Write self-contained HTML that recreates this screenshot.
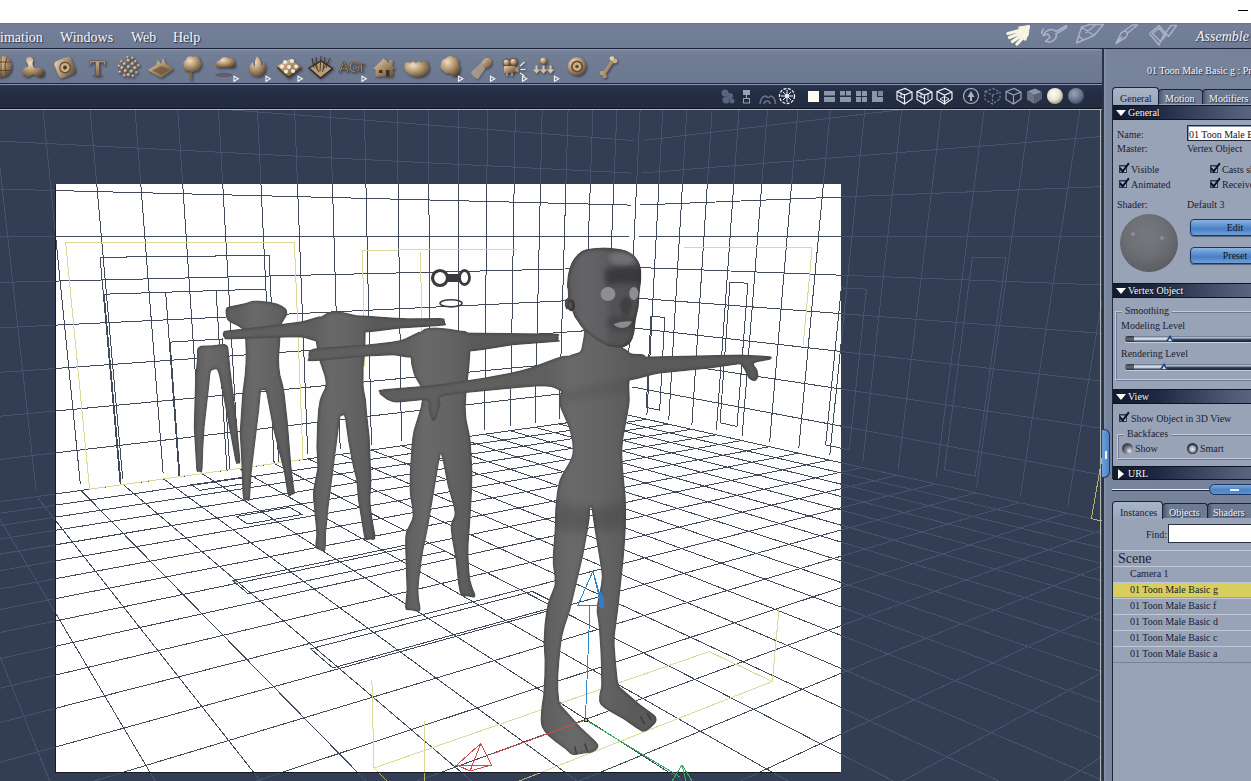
<!DOCTYPE html>
<html><head><meta charset="utf-8"><title>Carrara</title>
<style>
html,body{margin:0;padding:0;background:#fff;overflow:hidden}
body{width:1251px;height:781px;position:relative;font-family:"Liberation Serif",serif;font-size:11px;color:#1b2130}
div,span{box-sizing:border-box}
.abs{position:absolute}
#menubar{position:absolute;left:0;top:23px;width:1251px;height:25px;background:linear-gradient(#6b7386 0,#747f99 2px,#717d96 60%,#6f7b93 100%)}
#menubar span.m{position:absolute;top:7px;font-size:14px;color:#f4f6fa;text-shadow:1px 1px 1px #2a3246;white-space:nowrap}
#l48{position:absolute;left:0;top:48px;width:1251px;height:1px;background:#1a2238}
#toolbar{position:absolute;left:0;top:49px;width:1103px;height:34px;background:linear-gradient(#8e9bb4 0,#747f98 2px,#6f7b92 50%,#6c7890 100%)}
#l83{position:absolute;left:0;top:83px;width:1103px;height:1px;background:#1b2440}
#l84{position:absolute;left:0;top:84px;width:1103px;height:1px;background:#8492ae}
#strip{position:absolute;left:0;top:85px;width:1103px;height:23px;background:linear-gradient(#2a3550,#242e43 30%,#222b3f)}
#l108{position:absolute;left:0;top:108px;width:1103px;height:1px;background:#0f141e}
#l109{position:absolute;left:0;top:109px;width:1102px;height:1px;background:#b4b8b2}
#vp{position:absolute;left:0;top:110px;width:1102px;height:671px;background:#333e55;overflow:hidden}
#vp svg{position:absolute;left:0;top:0}
#vpr{position:absolute;left:1100px;top:109px;width:1px;height:672px;background:#b4b8b2;z-index:3}
#pl{position:absolute;left:1102px;top:49px;width:2px;z-index:3;height:732px;background:#2a3348}
#panel{position:absolute;left:1104px;top:49px;width:147px;height:732px;background:linear-gradient(90deg,#8793aa 0,#78849b 3px,#768299 100%);overflow:hidden}
#panel .t{position:absolute;margin-top:1px;white-space:nowrap;font-size:10px;line-height:12px;color:#1a2030}
#panel .w{color:#f2f5fa;text-shadow:1px 1px 1px #1c2436}
.tab{position:absolute;border:1px solid #1a2234;border-bottom:none;border-radius:4px 4px 0 0;font-size:10px;line-height:12px;white-space:nowrap}
.tab.on{background:linear-gradient(#a9b4c8,#9aa6bc);color:#1a2030}
.tab.off{background:linear-gradient(90deg,#4a556c 0,#6d7990 5px,#6f7b92 100%);color:#f2f5fa;text-shadow:1px 1px 1px #1c2436}
.hdr{position:absolute;left:9px;width:140px;height:15px;background:linear-gradient(90deg,#131a2e 0,#1d2740 30%,#4f5b75 85%,#5a6680 100%);border-top:1px solid #0e1424;border-bottom:1px solid #0e1424}
.hdr span{position:absolute;left:15px;top:1px;font-size:10px;line-height:12px;color:#f4f6fb;text-shadow:1px 1px 0 #0a0f1c;white-space:nowrap}
.tri-d{position:absolute;left:3px;top:4px;width:0;height:0;border-left:5px solid transparent;border-right:5px solid transparent;border-top:6px solid #fff}
.tri-r{position:absolute;left:5px;top:2px;width:0;height:0;border-top:5px solid transparent;border-bottom:5px solid transparent;border-left:6px solid #fff}
.content{position:absolute;left:8px;width:141px;background:#98a3b8;border-left:1px solid #1c2438}
.cb{position:absolute;width:8px;height:8px;border:1px solid #2c3a58;background:#a9b6cc;box-shadow:inset 1px 1px 0 #5d6c8c}
.cb:after{content:"";position:absolute;left:2px;top:-5px;width:3px;height:9px;border:solid #0c1222;border-width:0 2px 2px 0;transform:rotate(38deg) skewY(10deg)}
.fs{position:absolute;border:1px solid #c3cbdb;box-shadow:1px 1px 0 #6f7b93, inset 1px 1px 0 #6f7b93;border-right:none}
.lg{position:absolute;margin-top:1px;background:#98a3b8;padding:0 3px;font-size:10px;line-height:12px;color:#1a2030;white-space:nowrap}
.btn{position:absolute;left:86px;width:90px;height:17px;border:1px solid #1a3563;border-radius:4px;background:linear-gradient(#8db6e2 0,#5f93d1 35%,#4a80c4 60%,#6da0da 100%);font-size:10px;line-height:15px;text-align:center;color:#0e1628;box-shadow:0 1px 1px #56627a}
.sl{position:absolute;left:21px;width:130px;height:6px;border-radius:3px;background:linear-gradient(#5a6880 0,#c9d2e2 35%,#e8edf5 50%,#76839b 75%,#2c3850 100%);box-shadow:0 1px 0 #c5cddb}
.sl i{position:absolute;left:0;top:0;width:9px;height:6px;border-radius:3px 0 0 3px;background:linear-gradient(#2a2f3a,#6a6f78 50%,#2c303a)}
.sl b{position:absolute;top:1px;height:5px;right:0;border-radius:0 3px 3px 0;background:linear-gradient(#c9d2e2 0,#8f9bb3 25%,#2a3650 55%,#1c2640 100%)}
.th{position:absolute;width:0;height:0;border-left:4px solid transparent;border-right:4px solid transparent;border-bottom:6px solid #24406e}
.th:after{content:"";position:absolute;left:-2px;top:3px;border-left:2px solid transparent;border-right:2px solid transparent;border-bottom:3px solid #c9dcf2}
.rad{position:absolute;width:11px;height:11px;border-radius:50%}
.row{position:absolute;left:0;width:140px;height:15px;border-top:1px solid #c0c9da;font-size:10px;line-height:14px;color:#1a2030;padding-left:17px;white-space:nowrap}

</style></head><body>
<div class="abs" style="left:1238px;top:10px;width:10px;height:1px;background:#000"></div>
<div id="menubar"><span class="m" style="left:0px">imation</span><span class="m" style="left:60px">Windows</span><span class="m" style="left:131px">Web</span><span class="m" style="left:173px">Help</span><span class="m" style="left:1196px;font-style:italic;top:6px">Assemble</span></div>
<div id="l48"></div><div id="toolbar"></div><div id="l83"></div><div id="l84"></div><div id="strip"></div><div id="l108"></div><div id="l109"></div><div id="vpr"></div><div id="pl"></div>

<svg class="abs" style="left:0;top:49px" width="640" height="36" viewBox="0 49 640 36">
<defs>
<linearGradient id="bz" x1="0" y1="0" x2="1" y2="1"><stop offset="0" stop-color="#ead8b8"/><stop offset="0.45" stop-color="#b0926e"/><stop offset="1" stop-color="#5c4832"/></linearGradient>
<linearGradient id="bz2" x1="0" y1="0" x2="0" y2="1"><stop offset="0" stop-color="#e2ceac"/><stop offset="0.5" stop-color="#a78a66"/><stop offset="1" stop-color="#64503a"/></linearGradient>
<radialGradient id="bzr" cx="0.35" cy="0.3" r="0.8"><stop offset="0" stop-color="#f0dfc2"/><stop offset="0.5" stop-color="#b0926e"/><stop offset="1" stop-color="#55412c"/></radialGradient>
<filter id="sh" x="-20%" y="-20%" width="150%" height="150%"><feDropShadow dx="1" dy="1.2" stdDeviation="0.8" flood-color="#20283a" flood-opacity="0.75"/></filter>
</defs>
<g filter="url(#sh)">
<circle cx="1" cy="66.5" r="11" fill="url(#bzr)"/><path d="M-6 58Q1 66-6 75M1 55.5V77.5M7 58Q3 66 7 75M-10 62H11M-10 70.5H11" stroke="#5a4630" stroke-width="1" fill="none"/>
<path d="M26 61a3.6 3.6 0 1 1 6.5 1.5Q32 66 35 68.5Q38 67.5 41 68.5a4.5 4.5 0 1 1-4 7.5Q34 73.5 31.5 75a5 5 0 1 1-3.5-8Q29 64.5 26 61Z" fill="url(#bzr)"/>
<g transform="rotate(-22 65 67.5)"><rect x="56" y="58.5" width="18" height="18" rx="4" fill="url(#bz)"/><circle cx="65" cy="67.5" r="5.2" fill="#c9b08a" stroke="#5e4a34" stroke-width="1.2"/><circle cx="65" cy="67.5" r="2" fill="#4e3c28"/></g>
<text x="97.5" y="76" text-anchor="middle" font-family="Liberation Serif,serif" font-weight="bold" font-size="24" fill="url(#bz2)" stroke="#5a4630" stroke-width="0.5">T</text>
<circle cx="128.5" cy="67.0" r="1.9" fill="url(#bzr)"/>
<circle cx="124.5" cy="64.0" r="1.9" fill="url(#bzr)"/>
<circle cx="132.5" cy="64.0" r="1.9" fill="url(#bzr)"/>
<circle cx="128.5" cy="60.5" r="1.9" fill="url(#bzr)"/>
<circle cx="122.0" cy="68.0" r="1.9" fill="url(#bzr)"/>
<circle cx="135.0" cy="68.0" r="1.9" fill="url(#bzr)"/>
<circle cx="125.5" cy="71.0" r="1.9" fill="url(#bzr)"/>
<circle cx="131.5" cy="71.5" r="1.9" fill="url(#bzr)"/>
<circle cx="128.5" cy="75.0" r="1.9" fill="url(#bzr)"/>
<circle cx="121.5" cy="61.5" r="1.5" fill="url(#bzr)"/>
<circle cx="135.5" cy="61.5" r="1.5" fill="url(#bzr)"/>
<circle cx="120.0" cy="72.0" r="1.5" fill="url(#bzr)"/>
<circle cx="136.5" cy="72.5" r="1.5" fill="url(#bzr)"/>
<circle cx="124.5" cy="75.5" r="1.5" fill="url(#bzr)"/>
<circle cx="133.0" cy="76.0" r="1.5" fill="url(#bzr)"/>
<circle cx="119.0" cy="66.0" r="1.5" fill="url(#bzr)"/>
<circle cx="138.5" cy="65.5" r="1.5" fill="url(#bzr)"/>
<circle cx="127.5" cy="57.5" r="1.5" fill="url(#bzr)"/>
<circle cx="132.5" cy="58.0" r="1.5" fill="url(#bzr)"/>
<path d="M148 70L156 65L158 60L161 64L163 58L166 64L174 69L161 78Z" fill="url(#bz)"/><path d="M152 70.5L161 66L170 69.5L161 75Z" fill="#6b5438" opacity="0.7"/>
<path d="M191 80V70" stroke="#7a6246" stroke-width="2.2"/><path d="M184 66a4 4 0 0 1 2-6a4.5 4.5 0 0 1 7-3a4.5 4.5 0 0 1 7 4a4 4 0 0 1 0 6.5a4 4 0 0 1-5 3.5a4.5 4.5 0 0 1-6 0a4 4 0 0 1-5-5Z" fill="url(#bzr)"/>
<path d="M216 65a4 4 0 0 1 4-4.5a5.5 5.5 0 0 1 9-2a4.5 4.5 0 0 1 6 5.5a2.5 2.5 0 0 1-1 3.5H218a3 3 0 0 1-2-2.5Z" fill="url(#bzr)"/>
</g>
<ellipse cx="224" cy="75" rx="9" ry="2.2" fill="#5b5562" opacity="0.8"/>
<g filter="url(#sh)">
<path d="M257 56Q262 61 261 66Q264 64 263.5 61Q267 67 265 72Q262.5 77 257 76.5Q250.5 76 249.5 70Q249 65 253 62Q253 66 255 66.5Q254.5 60 257 56Z" fill="url(#bzr)"/>
<path d="M277 66L290 59L301.5 67L288.5 76.5Z" fill="url(#bz)"/><path d="M277 66L288.5 76.5L301.5 67L301.5 69L288.5 78.5L277 68Z" fill="#4e3c28"/>
<circle cx="285" cy="62" r="2" fill="#f3ead8"/>
<circle cx="292" cy="61" r="2" fill="#f3ead8"/>
<circle cx="282" cy="66.5" r="2" fill="#f3ead8"/>
<circle cx="289" cy="67" r="2" fill="#f3ead8"/>
<circle cx="296" cy="66.5" r="2" fill="#f3ead8"/>
<circle cx="286" cy="71.5" r="2" fill="#f3ead8"/>
<circle cx="293" cy="71" r="2" fill="#f3ead8"/>
<path d="M309 68L321 61L332.5 68.5L320.5 78Z" fill="#b89c76" stroke="#2e2418" stroke-width="1.2"/><path d="M314 68L312 58M317 69L316 57M320 71L321 56M323 69L325 57M326 68L330 58M319 72L314 63M322 72L327 62" stroke="#3e3020" stroke-width="0.9" fill="none"/>
<text x="352" y="72" text-anchor="middle" font-family="Liberation Sans,sans-serif" font-size="14.5" fill="#c4a982" stroke="#4a3a28" stroke-width="0.6">AGr</text>
<path d="M373 69L383.5 58.5L389 63V60H392.5V66L395.5 69H393V76.5H375.5V69Z" fill="url(#bz)"/><rect x="379" y="70" width="3.5" height="3" fill="#3e3020"/><rect x="386" y="70" width="3.5" height="6.5" fill="#3e3020"/>
<path d="M404.5 65a3 3 0 0 1 5.5-1.5a3.2 3.2 0 0 1 6 0a3.2 3.2 0 0 1 6 0a3 3 0 0 1 6 0.5Q431 70 426 74.5Q418 79.5 410 75Q404 71 404.5 65Z" fill="url(#bzr)"/>
<path d="M441 64a5 5 0 0 1 5-5.5a5 5 0 0 1 8-1a5 5 0 0 1 4.5 7a5 5 0 0 1 1 6.5Q460 75 456.5 76Q452 77 450 73a5 5 0 0 1-7-2.5a4.5 4.5 0 0 1-2-6.5Z" fill="url(#bzr)"/>
<path d="M481 63L485 58.5Q489 57 491.5 60.5Q492.5 64 489 67L485 68.5Z" fill="url(#bz)"/><path d="M481 63L485 68.5L478 79Q472 77 471 72Z" fill="#cdb690" opacity="0.550"/>
<circle cx="506.5" cy="62.5" r="3.6" fill="url(#bzr)" stroke="#5a4630" stroke-width="0.8"/><circle cx="513.5" cy="62" r="3.8" fill="url(#bzr)" stroke="#5a4630" stroke-width="0.8"/><rect x="504" y="66" width="11" height="7" rx="1" fill="url(#bz)"/><path d="M515 68L518.5 66.5V72.5L515 71ZM506 73V76H508V73M511 73V76H513V73" fill="#a88a66"/><path d="M520 66L524.5 62M520.5 69.5H525.5M520 73L524.5 76" stroke="#f3ead8" stroke-width="1.1"/>
<circle cx="543.5" cy="61" r="3.5" fill="url(#bzr)"/>
<path d="M535.5 65.5v4h-2.6l3.6 4l3.6-4h-2.6v-4Z" fill="#d9c3a0"/>
<path d="M542.5 65.5v4h-2.6l3.6 4l3.6-4h-2.6v-4Z" fill="#d9c3a0"/>
<path d="M549.5 65.5v4h-2.6l3.6 4l3.6-4h-2.6v-4Z" fill="#d9c3a0"/>
<circle cx="577" cy="66.5" r="9.3" fill="url(#bzr)"/><circle cx="577" cy="66.5" r="6" fill="#5e4a34"/><circle cx="577" cy="66.5" r="4.3" fill="#cbb28c"/><circle cx="577" cy="66.5" r="1.8" fill="#5e4a34"/>
<path d="M603.5 74.5L613 60.5" stroke="url(#bz)" stroke-width="3.2" stroke-linecap="round"/><circle cx="602" cy="73" r="2.3" fill="#b89c76"/><circle cx="604.5" cy="76" r="2.3" fill="#a88a66"/><circle cx="612" cy="58.5" r="2.3" fill="#e2ceac"/><circle cx="615" cy="61" r="2.3" fill="#c9b08a"/>
</g>
<path d="M234 76.2L238.3 78.7L234 81.2Z" fill="none" stroke="#f4f6fa" stroke-width="1.1"/>
<path d="M266 76.2L270.3 78.7L266 81.2Z" fill="none" stroke="#f4f6fa" stroke-width="1.1"/>
<path d="M298 76.2L302.3 78.7L298 81.2Z" fill="none" stroke="#f4f6fa" stroke-width="1.1"/>
<path d="M362 76.2L366.3 78.7L362 81.2Z" fill="none" stroke="#f4f6fa" stroke-width="1.1"/>
<path d="M458.5 76.2L462.8 78.7L458.5 81.2Z" fill="none" stroke="#f4f6fa" stroke-width="1.1"/>
<path d="M490.5 76.2L494.8 78.7L490.5 81.2Z" fill="none" stroke="#f4f6fa" stroke-width="1.1"/>
<path d="M522.5 76.2L526.8 78.7L522.5 81.2Z" fill="none" stroke="#f4f6fa" stroke-width="1.1"/>
<path d="M554.5 76.2L558.8 78.7L554.5 81.2Z" fill="none" stroke="#f4f6fa" stroke-width="1.1"/>
</svg>
<div id="vp">
<svg id="scene" width="1102" height="671" viewBox="0 110 1102 671">
<defs>
<path id="g" d="M626.1 410.4L643.3 40.8M604.5 413.3L619.9 37.1M582.2 416.3L595.6 33.3M559.1 419.5L570.4 29.4M535.1 422.7L544.1 25.3M510.3 426.1L516.8 21.0M484.6 429.6L488.4 16.6M457.9 433.2L458.8 12.0M430.2 437.0L427.9 7.2M401.4 440.9L395.7 2.1M371.4 444.9L362.0 -3.1M340.2 449.2L326.8 -8.6M307.7 453.6L289.9 -14.4M273.9 458.2L251.3 -20.4M238.5 463.0L210.8 -26.7M201.6 468.0L168.2 -33.4M163.1 473.2L123.5 -40.4M122.7 478.7L76.3 -47.7M80.4 484.5L26.6 -55.5M36.1 490.5L-25.9 -63.7M-10.5 496.8L-81.4 -72.3M-59.4 503.4L-140.2 -81.5M-111.0 510.4L-202.6 -91.3M-165.3 517.8L-268.9 -101.6M-222.6 525.6L-339.5 -112.6M622.6 386.6L-229.8 486.2M623.9 357.5L-238.5 438.7M625.2 327.9L-247.4 390.0M626.6 297.9L-256.6 340.0M628.0 267.5L-266.0 288.7M629.4 236.5L-275.6 236.0M630.8 205.1L-285.6 181.9M632.2 173.1L-295.8 126.2M633.7 140.6L-306.2 69.0M635.2 107.6L-317.0 10.2M636.7 74.1L-328.1 -50.3M638.3 40.0L-339.5 -112.6M646.9 414.9L666.7 35.1M668.8 419.7L691.5 29.1M691.9 424.7L717.7 22.8M716.4 430.0L745.7 16.0M742.2 435.7L775.4 8.8M769.7 441.7L807.2 1.1M798.8 448.0L841.2 -7.1M829.8 454.8L877.6 -16.0M862.8 462.0L916.7 -25.4M898.1 469.7L958.9 -35.7M936.0 478.0L1004.6 -46.7M976.6 486.8L1054.0 -58.7M1020.3 496.4L1107.9 -71.7M1067.5 506.7L1166.7 -86.0M1118.6 517.8L1231.2 -101.6M1174.1 529.9L1302.2 -118.8M1234.6 543.1L1380.9 -137.9M1300.8 557.6L1468.4 -159.1M1373.6 573.5L1566.4 -182.8M1453.9 591.0L1677.0 -209.6M1543.2 610.5L1802.5 -240.0M1642.8 632.2L1946.5 -274.9M1754.7 656.6L2113.1 -315.3M1881.4 684.3L2308.2 -362.5M631.8 386.9L1905.4 625.5M633.2 357.7L1934.6 553.7M634.6 328.1L1965.1 479.0M636.0 298.1L1996.8 401.2M637.5 267.5L2029.9 320.0M639.0 236.5L2064.5 235.3M640.5 205.0L2100.6 146.8M642.0 173.0L2138.3 54.2M643.6 140.4L2177.8 -42.6M645.1 107.4L2219.2 -144.2M646.7 73.7L2262.6 -250.7M648.4 39.6L2308.2 -362.5M625.9 414.6L1877.3 694.5M604.4 417.6L1876.2 715.0M582.1 420.7L1875.0 737.4M559.0 423.9L1873.7 762.0M535.0 427.3L1872.3 789.1M510.3 430.7L1870.7 819.2M484.6 434.3L1868.9 852.8M457.9 438.0L1866.9 890.5M430.2 441.8L1864.7 933.1M401.4 445.8L1862.1 981.7M371.5 450.0L1859.2 1037.5M340.4 454.3L1855.7 1102.4M307.9 458.8L1851.7 1178.8M274.1 463.5L1846.9 1270.0M238.8 468.5L1841.1 1380.7M202.0 473.6L1833.8 1517.9M163.5 478.9L1824.6 1692.7M123.2 484.5L1812.5 1922.6M81.0 490.4L1795.8 2238.8M36.7 496.6L1771.4 2701.1M-9.7 503.0L1732.3 3441.1M-58.6 509.8L1659.8 4816.2M-110.0 517.0L1478.1 8259.4M-164.1 524.5L-68.0 9108.5M-221.3 532.5L-1788.2 9108.5M625.9 414.6L-221.3 532.5M646.7 419.3L-223.7 545.6M668.6 424.1L-226.3 559.9M691.7 429.3L-229.2 575.5M716.0 434.8L-232.3 592.8M741.9 440.5L-235.8 612.0M769.2 446.7L-239.7 633.3M798.3 453.2L-244.1 657.3M829.2 460.1L-249.0 684.3M862.2 467.5L-254.6 715.0M897.5 475.3L-261.1 750.2M935.2 483.8L-268.5 791.0M975.7 492.8L-277.3 838.9M1019.3 502.6L-287.7 895.9M1066.4 513.1L-300.3 964.8M1117.3 524.5L-315.8 1049.7M1172.7 536.9L-335.4 1157.2M1233.0 550.4L-361.1 1297.3M1299.0 565.1L-395.9 1487.9M1371.5 581.4L-446.0 1762.0M1451.6 599.3L-524.1 2190.0M1540.5 619.2L-663.4 2951.9M1639.7 641.3L-980.7 4688.9M1751.2 666.3L-1204.4 9108.5M1877.3 694.5L1433.3 9108.5M229.8 469.7L222.1 339.0L170.1 342.1L179.9 476.7M646.2 407.4L651.0 316.2L664.8 317.5L659.7 410.2ZM242.8 477.3L191.6 484.8L199.7 490.3L251.8 482.6ZM226.9 470.1L216.1 290.6L165.7 292.2L179.1 476.8M720.0 422.8L730.0 282.3L747.9 283.2L737.0 426.4ZM289.9 507.4L236.4 516.4L247.4 524.0L302.0 514.5ZM274.1 463.5L265.9 289.0L104.2 294.2L121.1 484.8M825.6 444.9L841.3 287.9L866.4 289.2L849.3 449.9ZM425.3 541.1L232.8 580.7L247.8 593.5L444.8 551.1ZM278.6 462.9L269.1 255.4L100.1 257.3L120.3 484.9M944.4 469.7L972.5 257.4L1005.9 258.0L975.1 476.2ZM532.4 591.4L310.6 648.8L332.8 667.9L560.2 605.5Z"/>
<path id="y" d="M303.0 459.5L294.4 242.2L65.7 242.9L89.6 489.2ZM1091.4 518.7L1139.3 243.7L1206.9 244.0L1151.7 532.2ZM709.1 651.6L373.9 768.0L424.9 818.1L772.3 681.5ZM362.4 250.3L519.0 249.0M684.0 247.5L738.7 247.1M738.7 247.1L812.1 247.9M362.4 250.3L365.0 367.0M371.9 680.0L373.9 768.0M420.8 251.7L421.7 380.0M424.2 721.0L424.9 818.1M812.1 247.9L803.2 345.0M779.1 608.0L772.3 681.5"/>
<clipPath id="fr"><rect x="56" y="184" width="785" height="588"/></clipPath>
</defs>
<g shape-rendering="crispEdges"><use href="#g" fill="none" stroke="#47536b" stroke-width="1"/>
<use href="#y" fill="none" stroke="#b9b468" stroke-width="1"/></g>

<rect x="55" y="185" width="785" height="588" fill="#161b26"/>
<rect x="56" y="184" width="785" height="588" fill="#fefefe"/>
<g clip-path="url(#fr)">
<g shape-rendering="crispEdges"><use href="#g" fill="none" stroke="#404a59" stroke-width="1"/>
<use href="#y" fill="none" stroke="#dcd896" stroke-width="1"/></g>

<defs><filter id="bl" x="-50%" y="-50%" width="200%" height="200%"><feGaussianBlur stdDeviation="4"/></filter>
<filter id="b2" x="-10%" y="-10%" width="120%" height="120%"><feGaussianBlur stdDeviation="1.3"/></filter>
<filter id="b3" x="-10%" y="-10%" width="120%" height="120%"><feGaussianBlur stdDeviation="2.6"/></filter>
<linearGradient id="gHd" gradientUnits="userSpaceOnUse" x1="566" y1="0" x2="641" y2="0"><stop offset="0" stop-color="#5c5c5e"/><stop offset="0.25" stop-color="#646466"/><stop offset="0.5" stop-color="#5f5f61"/><stop offset="0.62" stop-color="#535355"/><stop offset="1" stop-color="#4f4f51"/></linearGradient>
<path id="fA" d="M198.6 346.9L197.5 348.3L197.0 349.9L197.0 358.3L195.1 377.6L193.7 427.1L196.2 469.8L197.1 472.1L197.8 472.2L198.9 471.5L201.2 472.8L202.0 472.0L202.7 468.3L203.3 449.1L204.7 427.1L209.6 383.1L210.3 374.8L211.1 371.3L212.7 370.0L216.4 369.3L217.6 370.9L219.0 375.4L223.1 395.7L235.1 460.2L236.2 463.7L236.8 464.0L238.1 463.5L239.2 463.8L239.9 463.6L240.3 462.8L240.4 459.6L236.8 420.4L230.5 368.9L228.4 347.4L227.7 345.9L226.5 344.7L224.7 344.1L222.4 344.0L212.0 345.2L202.2 345.6L200.2 346.0Z"/>
<clipPath id="cA"><use href="#fA"/></clipPath>
<linearGradient id="gA" gradientUnits="userSpaceOnUse" x1="194" y1="0" x2="240" y2="0"><stop offset="0" stop-color="#5f5f5f"/><stop offset="0.3" stop-color="#696969"/><stop offset="0.6" stop-color="#646464"/><stop offset="1" stop-color="#5a5a5a"/></linearGradient>
<path id="fB" d="M225.9 308.6L225.4 310.8L225.7 314.6L226.7 318.7L227.8 320.5L229.9 322.3L237.1 325.7L242.1 329.1L243.8 331.0L244.9 334.1L245.6 351.7L245.4 364.0L244.6 374.8L242.1 394.3L239.6 432.6L241.1 458.3L242.4 493.4L243.4 500.7L244.4 501.4L246.5 500.0L248.0 500.9L248.9 501.0L249.7 500.3L250.1 498.8L251.4 476.7L252.5 465.7L259.2 410.7L260.8 393.5L261.1 391.4L261.9 389.8L263.4 390.4L265.0 390.2L266.2 392.9L272.7 427.2L283.7 471.3L287.1 492.2L288.4 496.2L289.5 496.8L291.7 494.9L294.5 494.0L295.0 492.3L294.1 487.6L291.4 465.7L287.8 421.6L284.7 393.8L283.4 386.1L280.4 374.7L279.4 366.9L279.1 358.3L280.4 339.0L280.4 328.1L282.0 323.4L286.8 315.5L287.4 313.3L287.0 310.4L285.8 308.5L284.0 306.9L281.6 305.4L277.2 303.6L269.7 301.8L258.1 300.5L252.1 300.7L245.5 302.9L232.3 305.7L227.2 307.1Z"/>
<clipPath id="cB"><use href="#fB"/></clipPath>
<linearGradient id="gB" gradientUnits="userSpaceOnUse" x1="238" y1="0" x2="292" y2="0"><stop offset="0" stop-color="#5f5f5f"/><stop offset="0.3" stop-color="#696969"/><stop offset="0.6" stop-color="#646464"/><stop offset="1" stop-color="#5a5a5a"/></linearGradient>
<path id="fC" d="M224.6 338.2L224.2 338.8L224.7 339.3L228.0 339.4L288.0 337.4L300.0 337.4L304.3 338.0L315.7 341.6L317.2 350.9L319.6 361.8L324.0 374.7L325.3 380.4L325.6 383.3L324.7 388.5L321.5 394.8L319.6 399.9L318.1 409.1L317.0 424.1L316.3 446.7L317.2 463.8L317.1 469.3L313.4 488.3L312.9 493.3L313.1 499.5L316.1 530.4L316.2 536.0L315.3 543.2L315.3 546.8L316.5 548.9L319.8 549.9L322.6 551.4L323.6 551.6L324.6 551.4L325.4 550.1L325.9 546.1L326.1 533.3L328.7 506.8L339.9 419.9L340.8 416.0L341.2 415.7L342.7 415.9L343.9 415.0L345.0 419.3L347.9 440.1L350.4 454.1L352.9 466.8L356.3 480.1L357.9 500.1L363.9 536.4L364.6 538.5L365.4 539.8L366.4 540.4L367.5 540.3L370.0 539.5L373.0 539.9L374.2 539.7L375.0 538.9L375.4 537.4L375.4 534.9L372.1 516.6L370.6 502.9L370.5 497.0L371.4 483.8L371.4 475.9L369.7 436.5L367.1 413.3L366.1 400.0L364.0 389.2L363.6 383.7L363.7 366.7L365.4 350.0L365.7 332.4L374.9 331.8L400.8 328.4L437.3 326.3L444.8 325.5L446.1 325.0L446.3 324.3L445.0 323.0L445.1 321.4L444.4 319.8L444.8 318.8L444.1 318.4L440.0 318.1L408.3 318.2L392.7 317.6L364.8 315.6L356.7 315.3L342.7 311.9L338.4 311.6L332.4 311.7L329.3 312.1L326.4 313.2L321.1 316.5L319.7 316.3L316.7 316.9L304.8 320.5L299.9 321.6L280.6 324.1L224.4 330.7L223.7 331.1L222.5 334.5L223.0 336.3Z"/>
<clipPath id="cC"><use href="#fC"/></clipPath>
<linearGradient id="gC" gradientUnits="userSpaceOnUse" x1="313" y1="0" x2="375" y2="0"><stop offset="0" stop-color="#5f5f5f"/><stop offset="0.3" stop-color="#696969"/><stop offset="0.6" stop-color="#646464"/><stop offset="1" stop-color="#5a5a5a"/></linearGradient>
<path id="fD" d="M421.2 331.6L418.9 331.8L416.2 332.9L405.0 338.5L400.7 339.9L390.9 341.7L367.0 344.4L322.4 347.6L313.9 348.6L309.9 350.0L308.9 351.1L308.3 354.6L308.5 358.0L307.4 360.0L307.6 360.8L308.7 361.3L314.7 361.3L367.9 356.6L389.6 355.4L394.8 355.6L406.4 357.6L410.6 357.7L411.3 365.1L413.6 374.1L414.8 376.9L420.7 387.1L421.6 389.7L422.1 395.2L421.7 401.0L420.6 407.4L413.6 429.9L412.2 438.3L411.3 447.2L409.7 473.4L409.6 490.0L409.9 494.9L412.1 508.3L412.6 516.0L411.9 519.2L410.7 522.1L406.5 530.5L405.6 534.0L405.1 537.8L405.1 546.3L406.5 590.0L405.0 606.1L405.2 608.2L405.8 609.6L406.9 610.3L411.9 610.4L418.0 612.0L419.6 611.4L420.4 610.1L420.6 608.0L419.0 598.4L418.5 590.0L419.3 579.6L421.6 561.7L423.3 550.9L428.4 526.1L438.8 463.7L440.9 453.9L442.6 460.1L447.6 486.1L453.0 504.2L454.5 512.0L454.4 515.0L453.7 517.3L451.7 521.7L450.8 524.4L450.6 528.0L451.6 537.5L455.6 560.1L458.0 583.5L459.6 592.1L460.8 594.6L462.2 595.9L463.7 596.4L467.9 596.4L473.6 597.8L474.8 597.3L475.4 596.1L475.3 594.3L472.3 586.8L470.4 579.9L469.4 571.0L468.5 555.2L468.6 545.1L470.4 520.0L472.0 492.2L472.5 471.9L470.9 442.5L469.9 435.2L466.7 420.1L466.0 413.0L465.8 406.7L466.6 391.6L469.4 367.0L470.5 351.4L481.7 350.2L512.9 345.2L556.0 342.0L559.9 341.5L560.2 341.1L560.0 340.5L558.5 339.9L558.8 338.0L558.5 336.0L559.5 335.0L559.4 334.2L555.0 333.6L468.0 332.6L466.1 331.3L462.6 330.8L462.2 330.2L461.6 330.8L447.9 328.6L436.0 327.6L430.2 327.8L425.3 328.6L423.3 329.5Z"/>
<clipPath id="cD"><use href="#fD"/></clipPath>
<linearGradient id="gD" gradientUnits="userSpaceOnUse" x1="405" y1="0" x2="475" y2="0"><stop offset="0" stop-color="#5f5f5f"/><stop offset="0.3" stop-color="#696969"/><stop offset="0.6" stop-color="#646464"/><stop offset="1" stop-color="#5a5a5a"/></linearGradient>
<path id="fE" d="M561.0 391.6L559.3 399.0L559.6 405.1L560.6 408.8L568.2 425.9L569.6 430.1L572.2 442.6L572.6 450.8L572.1 454.9L570.8 459.0L568.7 463.1L561.4 475.6L559.6 479.8L558.4 484.1L556.8 492.4L555.2 509.1L554.6 530.0L552.7 555.3L552.8 564.4L554.4 576.6L554.6 583.9L553.9 587.3L548.7 599.9L547.6 603.9L545.8 613.8L544.4 625.1L543.5 641.0L544.5 660.2L544.3 675.5L543.2 695.0L541.4 706.7L540.5 719.9L541.2 725.1L542.0 727.4L544.4 731.5L547.7 735.4L554.8 741.6L565.7 749.4L570.4 753.9L572.9 755.0L574.6 755.2L584.1 753.4L589.6 753.1L592.1 752.4L594.7 751.0L597.1 749.2L597.9 748.1L598.6 746.2L598.2 744.3L595.3 740.7L580.3 726.7L561.0 705.1L559.4 700.9L558.3 689.8L558.4 675.0L559.3 662.5L560.6 648.6L562.4 636.1L564.9 626.5L570.4 610.1L583.3 555.6L588.2 528.5L589.8 517.0L590.0 509.1L590.7 507.5L591.2 507.4L591.6 509.1L594.6 530.1L601.2 570.2L601.7 576.3L601.0 584.3L597.1 603.8L596.5 611.3L598.1 621.6L598.9 629.3L600.3 649.9L600.9 665.8L601.2 685.0L600.7 689.1L599.8 691.7L599.1 696.2L599.1 701.6L600.4 704.6L604.2 708.0L610.0 711.8L623.8 719.4L635.9 728.1L642.1 731.8L645.3 731.5L649.1 729.2L654.4 724.4L656.0 722.2L656.7 720.1L656.2 717.1L654.3 714.7L640.3 704.6L619.8 686.7L618.4 682.9L617.7 679.3L616.2 664.4L614.7 645.5L614.8 636.0L619.0 603.4L623.6 560.1L625.2 540.0L625.9 524.9L626.1 510.4L625.7 496.5L622.9 467.0L622.4 455.2L622.5 446.9L623.7 436.5L629.4 405.1L629.8 399.7L629.3 385.1L629.8 380.4L636.5 379.3L653.5 374.7L660.1 373.4L710.0 368.4L738.0 364.5L740.1 364.5L741.7 365.2L742.2 366.5L744.2 369.5L748.0 377.4L749.3 379.0L752.2 380.7L754.7 381.1L755.8 380.7L757.2 379.2L758.3 377.0L758.5 375.1L757.4 369.8L754.2 364.9L754.0 364.0L754.3 363.3L757.9 362.1L769.3 360.0L771.2 358.9L771.9 357.2L771.3 356.6L770.1 356.3L761.7 355.5L740.0 354.6L645.7 356.4L645.3 355.7L643.6 354.4L641.4 353.9L633.9 353.8L632.1 353.6L629.6 352.4L626.3 349.6L622.8 347.7L623.3 347.1L629.0 344.2L630.3 343.0L632.8 338.2L634.4 332.5L635.9 319.7L638.7 306.9L639.6 293.8L641.3 279.2L641.2 270.5L639.9 264.5L637.9 260.2L634.3 255.6L631.1 253.2L626.0 250.5L619.8 249.0L609.3 247.8L603.2 247.5L595.8 247.9L587.8 248.9L583.8 250.0L581.0 251.4L577.7 254.3L574.3 258.2L571.5 262.8L569.5 268.0L567.7 275.8L566.9 287.0L567.6 289.1L568.0 296.3L567.6 298.0L565.7 299.2L565.2 299.9L564.7 302.4L564.8 305.1L565.7 308.3L566.8 309.4L567.8 309.3L569.9 307.8L570.9 307.9L574.6 317.2L581.2 325.8L583.6 330.1L583.9 332.2L583.6 336.5L581.2 349.2L579.7 351.7L578.2 352.6L571.4 354.5L568.8 355.8L568.0 355.6L562.6 356.1L555.9 358.1L529.9 367.8L519.9 370.6L508.8 372.9L483.2 377.7L444.9 383.6L421.8 386.1L385.0 389.1L378.9 390.1L378.2 390.9L379.4 391.9L379.5 393.7L380.7 395.1L386.5 399.5L391.6 401.8L395.0 402.4L399.5 402.5L422.2 400.2L425.9 400.4L427.8 401.2L428.6 402.3L428.8 403.7L428.3 407.3L428.6 409.1L430.3 415.3L432.1 420.2L433.7 421.2L435.1 420.3L436.4 418.2L440.4 405.1L440.5 403.1L439.4 399.9L439.4 398.7L440.2 397.6L442.7 396.4L446.8 395.4L466.2 393.0L515.0 388.3L536.7 386.6L545.0 386.5L550.9 387.1L555.3 388.5Z"/>
<clipPath id="cE"><use href="#fE"/></clipPath>
<linearGradient id="gE" gradientUnits="userSpaceOnUse" x1="545" y1="0" x2="635" y2="0"><stop offset="0" stop-color="#5f5f5f"/><stop offset="0.3" stop-color="#696969"/><stop offset="0.6" stop-color="#646464"/><stop offset="1" stop-color="#5a5a5a"/></linearGradient>
<clipPath id="cHd"><path d="M567.3 286.0C567.4 283.5 567.7 277.6 568.5 273.8C569.3 270.0 570.3 266.2 571.9 263.0C573.5 259.8 575.7 256.8 578.0 254.6C580.3 252.4 581.9 250.9 585.7 249.8C589.5 248.7 596.5 248.2 601.0 248.0C605.5 247.8 609.4 248.3 613.0 248.6C616.6 248.9 620.0 249.4 622.6 250.0C625.2 250.6 626.7 251.2 628.7 252.3C630.8 253.5 633.1 254.8 634.9 256.9C636.7 258.9 638.5 261.8 639.5 264.6C640.5 267.4 640.9 270.5 641.0 273.8C641.1 277.1 640.6 281.2 640.3 284.5C640.0 287.8 639.5 290.1 639.2 293.8C638.9 297.5 638.9 302.5 638.3 306.8C637.7 311.1 636.2 315.3 635.5 319.6C634.8 323.9 634.9 328.5 634.0 332.4C633.1 336.2 631.9 340.2 630.0 342.7C628.1 345.2 625.8 346.7 622.4 347.3C619.0 347.9 613.9 347.7 609.6 346.5C605.3 345.3 601.1 342.8 596.8 340.0C592.5 337.2 587.6 333.8 584.0 330.0C580.4 326.2 577.1 320.8 575.0 317.0C572.9 313.2 572.5 308.8 571.2 307.5C569.9 306.2 568.0 309.4 567.0 309.0C566.0 308.6 565.4 306.5 565.2 305.0C565.0 303.5 565.1 301.2 565.6 300.0C566.1 298.8 567.9 299.3 568.3 297.5C568.7 295.7 568.2 290.9 568.0 289.0C567.8 287.1 567.2 288.5 567.3 286.0Z"/></clipPath></defs>
<g clip-path="url(#cA)"><use href="#fA" fill="url(#gA)"/><use href="#fA" fill="none" stroke="#303030" stroke-width="3.2" opacity="0.4" filter="url(#b2)"/></g>
<g clip-path="url(#cB)"><use href="#fB" fill="url(#gB)"/><use href="#fB" fill="none" stroke="#303030" stroke-width="3.2" opacity="0.4" filter="url(#b2)"/></g>
<g clip-path="url(#cC)"><use href="#fC" fill="url(#gC)"/><use href="#fC" fill="none" stroke="#303030" stroke-width="3.2" opacity="0.4" filter="url(#b2)"/></g>
<g clip-path="url(#cD)"><use href="#fD" fill="url(#gD)"/><use href="#fD" fill="none" stroke="#303030" stroke-width="3.2" opacity="0.4" filter="url(#b2)"/></g>
<g clip-path="url(#cE)"><use href="#fE" fill="url(#gE)"/><use href="#fE" fill="none" stroke="#303030" stroke-width="3.2" opacity="0.4" filter="url(#b2)"/><path d="M563 392Q600 382 630 380L629 392Q600 396 563 402Z" fill="#333" opacity="0.12" filter="url(#b3)"/><path d="M560 500Q590 520 626 498L626 530L556 530Z" fill="#2c2c2c" opacity="0.22" filter="url(#bl)"/></g>
<g clip-path="url(#cHd)"><path d="M567.3 286.0C567.4 283.5 567.7 277.6 568.5 273.8C569.3 270.0 570.3 266.2 571.9 263.0C573.5 259.8 575.7 256.8 578.0 254.6C580.3 252.4 581.9 250.9 585.7 249.8C589.5 248.7 596.5 248.2 601.0 248.0C605.5 247.8 609.4 248.3 613.0 248.6C616.6 248.9 620.0 249.4 622.6 250.0C625.2 250.6 626.7 251.2 628.7 252.3C630.8 253.5 633.1 254.8 634.9 256.9C636.7 258.9 638.5 261.8 639.5 264.6C640.5 267.4 640.9 270.5 641.0 273.8C641.1 277.1 640.6 281.2 640.3 284.5C640.0 287.8 639.5 290.1 639.2 293.8C638.9 297.5 638.9 302.5 638.3 306.8C637.7 311.1 636.2 315.3 635.5 319.6C634.8 323.9 634.9 328.5 634.0 332.4C633.1 336.2 631.9 340.2 630.0 342.7C628.1 345.2 625.8 346.7 622.4 347.3C619.0 347.9 613.9 347.7 609.6 346.5C605.3 345.3 601.1 342.8 596.8 340.0C592.5 337.2 587.6 333.8 584.0 330.0C580.4 326.2 577.1 320.8 575.0 317.0C572.9 313.2 572.5 308.8 571.2 307.5C569.9 306.2 568.0 309.4 567.0 309.0C566.0 308.6 565.4 306.5 565.2 305.0C565.0 303.5 565.1 301.2 565.6 300.0C566.1 298.8 567.9 299.3 568.3 297.5C568.7 295.7 568.2 290.9 568.0 289.0C567.8 287.1 567.2 288.5 567.3 286.0Z" fill="url(#gHd)" /><ellipse cx="623" cy="258" rx="15" ry="7" fill="#7c7c7f" opacity="0.75" filter="url(#b3)"/><path d="M604 270Q622 266 642 268L642 284Q622 280 606 286Z" fill="#2c2c2e" opacity="0.6" filter="url(#b3)"/><ellipse cx="626" cy="306" rx="6" ry="9" fill="#2e2e30" opacity="0.45" filter="url(#b2)"/><ellipse cx="622" cy="323" rx="15" ry="8" fill="#2e2e30" opacity="0.32" filter="url(#b3)"/><path d="M567.3 286.0C567.4 283.5 567.7 277.6 568.5 273.8C569.3 270.0 570.3 266.2 571.9 263.0C573.5 259.8 575.7 256.8 578.0 254.6C580.3 252.4 581.9 250.9 585.7 249.8C589.5 248.7 596.5 248.2 601.0 248.0C605.5 247.8 609.4 248.3 613.0 248.6C616.6 248.9 620.0 249.4 622.6 250.0C625.2 250.6 626.7 251.2 628.7 252.3C630.8 253.5 633.1 254.8 634.9 256.9C636.7 258.9 638.5 261.8 639.5 264.6C640.5 267.4 640.9 270.5 641.0 273.8C641.1 277.1 640.6 281.2 640.3 284.5C640.0 287.8 639.5 290.1 639.2 293.8C638.9 297.5 638.9 302.5 638.3 306.8C637.7 311.1 636.2 315.3 635.5 319.6C634.8 323.9 634.9 328.5 634.0 332.4C633.1 336.2 631.9 340.2 630.0 342.7C628.1 345.2 625.8 346.7 622.4 347.3C619.0 347.9 613.9 347.7 609.6 346.5C605.3 345.3 601.1 342.8 596.8 340.0C592.5 337.2 587.6 333.8 584.0 330.0C580.4 326.2 577.1 320.8 575.0 317.0C572.9 313.2 572.5 308.8 571.2 307.5C569.9 306.2 568.0 309.4 567.0 309.0C566.0 308.6 565.4 306.5 565.2 305.0C565.0 303.5 565.1 301.2 565.6 300.0C566.1 298.8 567.9 299.3 568.3 297.5C568.7 295.7 568.2 290.9 568.0 289.0C567.8 287.1 567.2 288.5 567.3 286.0Z" fill="none" stroke="#2a2a2a" stroke-width="4" opacity="0.38" filter="url(#b2)"/></g>
<ellipse cx="608" cy="294" rx="7.4" ry="6.9" fill="#8e8e90"/><ellipse cx="633.8" cy="293.5" rx="4.5" ry="6.5" fill="#8e8e90"/>
<path d="M613.5 324Q622 320.5 632 321.5Q629.5 327.5 621.5 328Q616 327.5 613.5 324Z" fill="#8c8c8e"/>
<ellipse cx="571.2" cy="305.3" rx="3.8" ry="6" fill="#3a3a3c"/><ellipse cx="570.3" cy="305.3" rx="1.6" ry="3.5" fill="#555557"/>
<g fill="none" stroke="#3a3a3c"><ellipse cx="440" cy="278" rx="7.5" ry="7.5" stroke-width="3.2"/><ellipse cx="464.5" cy="277.5" rx="5" ry="7" stroke-width="2.8"/><path d="M447 278H460" stroke-width="8"/><ellipse cx="451" cy="303.3" rx="11" ry="3.6" stroke-width="1.6"/></g>
<path d="M574.5 746.5L576.5 753.5M584.5 743.5L587.5 751M640.5 716.5L644.5 724M647 713.5L651.5 720.5" stroke="#2f2f2f" stroke-width="1.3" fill="none" opacity="0.8"/>
</g>
<g fill="none" stroke-width="1" shape-rendering="crispEdges">
<path d="M585.4 720L590 605M578 605H601L593 571ZM593 571L603 606" stroke="#2a86c4"/>
<path d="M600 592Q606 600 603 608L599 606Z" fill="#2f7fd0" stroke="#2f7fd0"/>
<path d="M585.4 720L492 754M456.8 765L480.8 743.5L491.7 765ZM480.8 743.5L470 771L456.8 765M470 771L491.7 765" stroke="#cf4a4a"/>
<path d="M585.4 720L680 777M672 781L682 765L692 781M682 765L686 781" stroke="#35b45e"/>
<rect x="584" y="718.5" width="3" height="3" fill="#e8d36a" stroke="#2a2a20"/>
</g>

</svg>
</div>
<svg class="abs" style="left:700px;top:85px" width="402" height="23" viewBox="700 85 402 23">
<defs><radialGradient id="sp1" cx="0.4" cy="0.35" r="0.7"><stop offset="0" stop-color="#fffff4"/><stop offset="0.6" stop-color="#e4e2cf"/><stop offset="1" stop-color="#8f917f"/></radialGradient>
<radialGradient id="sp2" cx="0.4" cy="0.35" r="0.7"><stop offset="0" stop-color="#9aa3b6"/><stop offset="0.6" stop-color="#6b758b"/><stop offset="1" stop-color="#3c465c"/></radialGradient></defs>
<g fill="#5a657c"><circle cx="725" cy="93" r="3.5"/><circle cx="730" cy="96" r="3"/><circle cx="726" cy="100" r="3.5"/><circle cx="732" cy="101" r="2.5"/></g>
<rect x="743" y="90" width="7" height="5" fill="#98a2b5"/><path d="M746.5 95V98" stroke="#98a2b5"/><rect x="743.5" y="98.5" width="6" height="4.5" fill="none" stroke="#98a2b5"/>
<path d="M760 104Q761 96 766 96Q768 99 771 96Q775 97 775.5 104M764 104a3 3 0 0 1 6 0" fill="none" stroke="#66718a" stroke-width="1.6"/>
<circle cx="787" cy="96" r="7.5" fill="none" stroke="#f4f6fa" stroke-width="1.3" stroke-dasharray="3 1.5"/><path d="M787 90V102M781 96H793M783 92L791 100M791 92L783 100" stroke="#f4f6fa" stroke-width="1"/><rect x="785" y="94" width="4" height="4" fill="#dfe4ee"/>
<rect x="808" y="91" width="11" height="11" fill="#fdfdf4"/>
<g fill="#8d97ab"><rect x="824" y="91" width="11" height="4.5"/><rect x="824" y="97" width="11" height="5"/>
<rect x="840" y="91" width="5" height="4.5"/><rect x="846" y="91" width="5" height="4.5"/><rect x="840" y="97" width="11" height="5"/>
<rect x="856" y="91" width="5" height="5"/><rect x="862" y="91" width="5" height="5"/><rect x="856" y="97" width="5" height="5"/><rect x="862" y="97" width="5" height="5"/>
<rect x="872" y="91" width="5" height="11"/><rect x="872" y="97" width="11" height="5"/><rect x="878" y="91" width="5" height="5" opacity="0.850"/></g>
<path d="M897 91.500L905 88.500L912 92V99L904.5 104L897 99.500ZM897 91.500L904.5 95L912 92M904.5 95V104" fill="none" stroke="#eef1f7" stroke-width="1.2" />
<path d="M917 91.500L925 88.500L932 92V99L924.5 104L917 99.500ZM917 91.500L924.5 95L932 92M924.5 95V104" fill="none" stroke="#eef1f7" stroke-width="1.2" />
<path d="M937 91.500L945 88.500L952 92V99L944.5 104L937 99.500ZM937 91.500L944.5 95L952 92M944.5 95V104" fill="none" stroke="#eef1f7" stroke-width="1.2" />
<path d="M901 92.500V98.500M904.5 94V100.500M897.5 95.500L904.5 98.5" stroke="#eef1f7" stroke-width="0.9"/>
<path d="M921 92.500V98.500M917.5 95.500L924.5 98.500M928 93.500V100" stroke="#eef1f7" stroke-width="0.9"/>
<path d="M940 99L944.5 96.500L949 99L944.5 101.500Z" stroke="#eef1f7" stroke-width="0.9" fill="none"/>
<circle cx="971" cy="96" r="7.5" fill="none" stroke="#aab3c6" stroke-width="1.2"/><path d="M971 91L967.5 97H970V101H972V97H974.500Z" fill="#aab3c6"/>
<path d="M985 91.500L993 88.500L1000 92V99L992.5 104L985 99.500ZM985 91.500L992.5 95L1000 92M992.5 95V104" fill="none" stroke="#727d95" stroke-width="1.2" stroke-dasharray="2.5 1.5"/>
<path d="M1006 91.500L1014 88.500L1021 92V99L1013.5 104L1006 99.500ZM1006 91.500L1013.5 95L1021 92M1013.5 95V104" fill="none" stroke="#9aa4b8" stroke-width="1.2" />
<path d="M1027 91.500L1035 88.500L1042 92L1034.5 95Z" fill="#8a94a6"/><path d="M1027 91.500L1034.5 95V104L1027 99.500Z" fill="#6a7486"/><path d="M1034.5 95L1042 92V99L1034.5 104Z" fill="#586274"/>
<circle cx="1055" cy="96" r="8" fill="url(#sp1)"/><circle cx="1076" cy="96" r="8" fill="url(#sp2)"/>
</svg>
<svg class="abs" style="left:1000px;top:23px" width="190" height="25" viewBox="1000 23 190 25">
<g stroke="#f7f4e2" stroke-width="3.2" stroke-linecap="round" fill="#f7f4e2"><path d="M1021 30L1008 33.500M1022 32.500L1009.5 37.500M1023.5 34L1012.5 41.500M1025.5 35L1017 44M1028 27L1025 39"/><path d="M1019 27L1029.5 25.500L1028 36L1022 37Z" stroke-width="1"/></g>
<g fill="none" stroke="#a9b3c6" stroke-width="1.5" stroke-linejoin="round">
<path d="M1066.5 25.500L1056 31.500Q1054 29 1050.5 29.500Q1045 31 1043 35.500L1048 34L1050 37.500L1045.5 41Q1051 43.5 1055 39Q1057 36.5 1056 34L1066.5 27.500Z"/><path d="M1042 34Q1041 31 1044 28.5"/>
<path d="M1076.5 43L1081.5 27L1094 35.500ZM1081.5 27L1090 24.500H1103.500L1094 35.500M1085.5 33L1096 24.500M1079 36.500L1083 39.5"/>
<path d="M1116 43.500L1121 33Q1124 30 1127 32Q1128 35 1125.5 37.500ZM1124 31L1132.5 25H1137.500L1127 33.500M1116 43.500L1122 36.5"/>
<path d="M1149.5 33.500L1159 25.500L1168.5 36.500L1176.5 25.500H1171L1162.5 37L1159 45L1149.5 33.500M1152.5 33.500L1159 28L1165.5 36L1160.5 41.500Z"/>
</g></svg>
<div id="panel">
<div class="t w" style="left:43px;top:15px">01 Toon Male Basic g : Pr</div>
<!-- top tabs -->
<div class="tab off" style="left:54px;top:40px;width:45px;height:16px;padding:3px 0 0 6px">Motion</div>
<div class="tab off" style="left:98px;top:40px;width:60px;height:16px;padding:3px 0 0 6px">Modifiers</div>
<div class="tab on" style="left:8px;top:38px;width:47px;height:18px;padding:5px 0 0 7px;z-index:2">General</div>
<div class="content" style="top:55px;height:375px"></div>
<div class="hdr" style="top:56px"><div class="tri-d"></div><span>General</span></div>
<div class="t" style="left:13px;top:79px">Name:</div>
<div class="abs" style="left:83px;top:76px;width:70px;height:16px;background:#fff;border:1px solid #20283a;border-right:none;box-shadow:inset 1px 1px 0 #8d96a8"></div>
<div class="t" style="left:85px;top:79px;color:#10141c">01 Toon Male Basic g</div>
<div class="t" style="left:13px;top:93px">Master:</div>
<div class="t" style="left:83px;top:93px">Vertex Object</div>
<div class="cb" style="left:15px;top:116px"></div><div class="t" style="left:27px;top:114px">Visible</div>
<div class="cb" style="left:106px;top:116px"></div><div class="t" style="left:118px;top:114px">Casts shadows</div>
<div class="cb" style="left:15px;top:131px"></div><div class="t" style="left:27px;top:129px">Animated</div>
<div class="cb" style="left:106px;top:131px"></div><div class="t" style="left:118px;top:129px">Receives shadows</div>
<div class="t" style="left:13px;top:149px">Shader:</div>
<div class="t" style="left:83px;top:149px">Default 3</div>
<div class="abs" style="left:16px;top:165px;width:58px;height:58px;border-radius:50%;background:radial-gradient(circle at 45% 36%,#76787d 0,#6e7075 40%,#5f6166 70%,#4b4d53 100%)"></div>
<div class="abs" style="left:27px;top:183px;width:4px;height:4px;border-radius:50%;background:#8b8d92"></div>
<div class="abs" style="left:56px;top:187px;width:4px;height:4px;border-radius:50%;background:#8b8d92"></div>
<div class="btn" style="top:170px">Edit</div>
<div class="btn" style="top:198px">Preset</div>
<div class="hdr" style="top:234px"><div class="tri-d"></div><span>Vertex Object</span></div>
<div class="fs" style="left:11px;top:262px;width:140px;height:69px"></div>
<div class="lg" style="left:18px;top:255px">Smoothing</div>
<div class="t" style="left:17px;top:270px">Modeling Level</div>
<div class="sl" style="top:287px"><i></i><b style="left:48px"></b></div><div class="th" style="left:62px;top:286px"></div>
<div class="t" style="left:17px;top:298px">Rendering Level</div>
<div class="sl" style="top:315px"><i></i><b style="left:42px"></b></div><div class="th" style="left:56px;top:314px"></div>
<div class="hdr" style="top:340px"><div class="tri-d"></div><span>View</span></div>
<div class="cb" style="left:15px;top:365px"></div><div class="t" style="left:27px;top:363px">Show Object in 3D View</div>
<div class="fs" style="left:13px;top:385px;width:140px;height:25px"></div>
<div class="lg" style="left:20px;top:378px">Backfaces</div>
<div class="rad" style="left:18px;top:394px;background:radial-gradient(circle at 68% 72%,#eef1f5 0,#a4a9b2 22%,#5a5e68 50%,#34373f 80%,#2a2d35 100%)"></div>
<div class="t" style="left:31px;top:393px">Show</div>
<div class="rad" style="left:83px;top:394px;background:radial-gradient(circle at 50% 55%,#e9edf3 0,#b4bac6 30%,#3a3e48 55%,#23262e 75%,#9aa2b2 100%)"></div>
<div class="t" style="left:96px;top:393px">Smart</div>
<div class="hdr" style="top:417px;height:14px"><div class="tri-r"></div><span>URL</span></div>
<!-- splitter -->
<div class="abs" style="left:8px;top:440px;width:100px;height:1px;background:#f0f3f8"></div>
<div class="abs" style="left:8px;top:441px;width:100px;height:1px;background:#1c2438"></div>
<div class="abs" style="left:105px;top:435px;width:60px;height:11px;border:1px solid #1a3563;border-radius:6px;background:linear-gradient(#7aa8dc,#4d84c8 50%,#5a90d0)"></div>
<div class="abs" style="left:126px;top:440px;width:9px;height:2px;background:#eef3fa"></div>
<!-- bottom tabs -->
<div class="tab off" style="left:58px;top:454px;width:46px;height:16px;padding:3px 0 0 6px">Objects</div>
<div class="tab off" style="left:103px;top:454px;width:60px;height:16px;padding:3px 0 0 5px">Shaders</div>
<div class="tab on" style="left:8px;top:452px;width:51px;height:18px;padding:5px 0 0 7px;z-index:2">Instances</div>
<div class="content" style="top:469px;height:270px">
<div class="t" style="left:33px;top:10px">Find:</div>
<div class="abs" style="left:55px;top:6px;width:90px;height:19px;background:#fff;border:1px solid #2a3246;border-right:none"></div>
<div class="abs" style="left:0;top:32px;width:140px;height:1px;background:#c0c9da"></div>
<div class="t" style="left:5px;top:33px;font-size:14px;line-height:14px">Scene</div>
<div class="row" style="top:48px">Camera 1</div>
<div class="row" style="top:64px;background:#d8ce5e">01 Toon Male Basic g</div>
<div class="row" style="top:80px">01 Toon Male Basic f</div>
<div class="row" style="top:96px">01 Toon Male Basic d</div>
<div class="row" style="top:112px">01 Toon Male Basic c</div>
<div class="row" style="top:128px">01 Toon Male Basic a</div>
<div class="abs" style="left:0;top:144px;width:140px;height:1px;background:#76829a"></div>
</div>
</div>
<!-- left blue handle -->
<div class="abs" style="z-index:4;left:1102px;top:429px;width:8px;height:49px;border:1px solid #1a3563;border-left:none;border-radius:0 6px 6px 0;background:linear-gradient(90deg,#6fa0d8,#4d84c8)"></div>
<div class="abs" style="z-index:5;left:1105px;top:451px;width:2px;height:8px;background:#eef3fa"></div>

</body></html>
